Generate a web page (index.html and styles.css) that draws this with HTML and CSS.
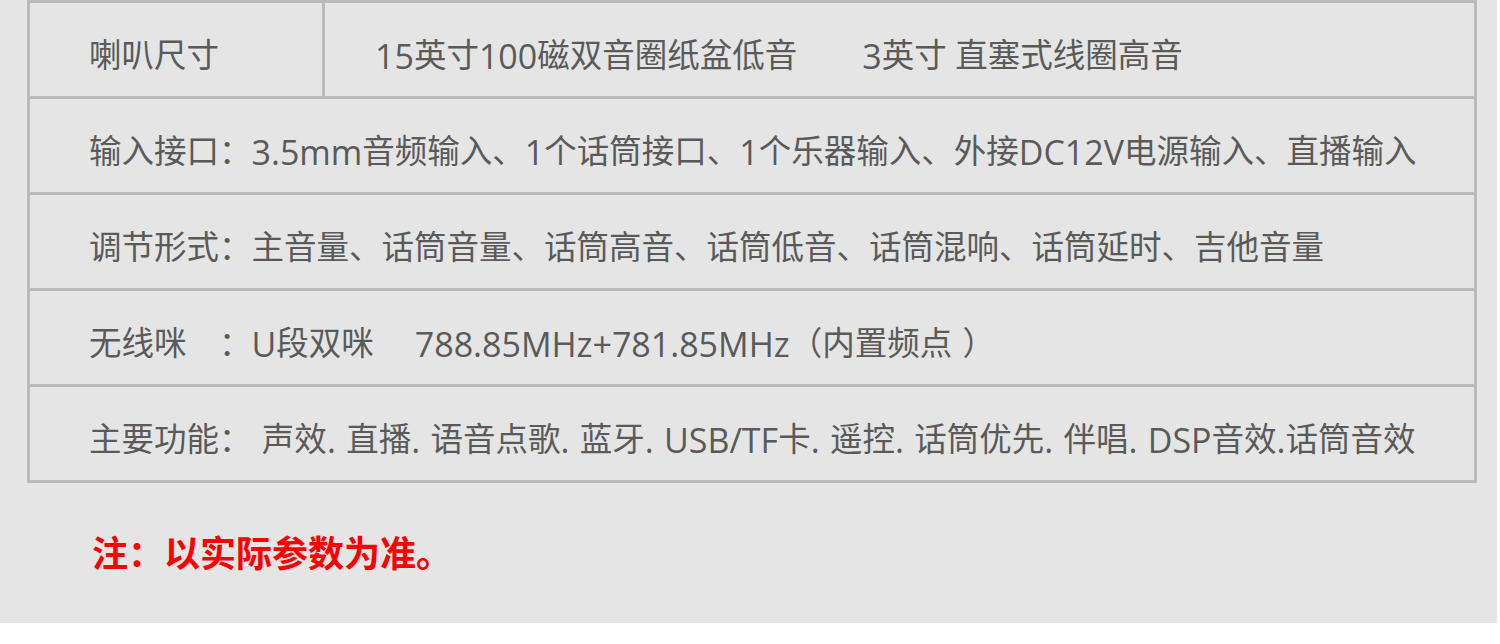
FILE: index.html
```html
<!DOCTYPE html>
<html lang="zh-CN">
<head>
<meta charset="utf-8">
<title>参数</title>
<link rel="stylesheet" href="styles.css">
</head>
<body>
<div class="page">
  <div class="spec">
    <div class="row row-split">
      <div class="cell-label">喇叭尺寸</div>
      <div class="cell-value"><span class="en">15</span>英寸<span class="en">100</span>磁双音圈纸盆低音　　<span class="en">3</span>英寸 直塞式线圈高音</div>
    </div>
    <div class="row">输入接口：<span class="en">3.5mm</span>音频输入、<span class="en">1</span>个话筒接口、<span class="en">1</span>个乐器输入、外接<span class="en">DC12V</span>电源输入、直播输入</div>
    <div class="row">调节形式：主音量、话筒音量、话筒高音、话筒低音、话筒混响、话筒延时、吉他音量</div>
    <div class="row">无线咪　：<span class="en">U</span>段双咪　 <span class="en">788.85MHz+781.85MHz</span>（内置频点<span class="en"> </span>）</div>
    <div class="row">主要功能：<span class="en"> </span>声效<span class="en">. </span>直播<span class="en">. </span>语音点歌<span class="en">. </span>蓝牙<span class="en">. USB/TF</span>卡<span class="en">. </span>遥控<span class="en">. </span>话筒优先<span class="en">. </span>伴唱<span class="en">. DSP</span>音效<span class="en">.</span>话筒音效</div>
  </div>
  <p class="note">注：以实际参数为准。</p>
</div>
</body>
</html>
```

FILE: styles.css
```css
html, body {
  margin: 0;
  padding: 0;
  background: #ffffff;
}

.page {
  width: 1497px;
  height: 623px;
  box-sizing: border-box;
  padding-left: 27px;
  background: #e5e5e5;
  font-family: "Open Sans", "Noto Sans CJK SC", sans-serif;
  overflow: hidden;
}

.spec {
  width: 1450px;
  box-sizing: border-box;
  border: 3px solid #bababa;
}

.row {
  height: 96px;
  box-sizing: border-box;
  display: flex;
  align-items: center;
  padding-left: 59px;
  padding-top: 12px;
  font-size: 32.5px;
  line-height: 1;
  color: #5a5a5a;
  white-space: pre;
  border-top: 3px solid #bababa;
}

.row:first-child {
  height: 93px;
  border-top: 0;
}

.row-split {
  padding-left: 0;
  padding-top: 0;
  align-items: stretch;
}

.cell-label {
  width: 295px;
  box-sizing: border-box;
  padding-left: 59px;
  padding-top: 12px;
  display: flex;
  align-items: center;
  border-right: 3px solid #bababa;
}

.cell-value {
  flex: 1;
  padding-left: 50px;
  padding-top: 12px;
  display: flex;
  align-items: center;
}

.en {
  font-size: 34px;
  line-height: 32px;
  word-spacing: 1.5px;
}

.note {
  margin: 50px 0 0 65px;
  font-family: "Noto Sans CJK SC", sans-serif;
  font-size: 36px;
  line-height: 1;
  font-weight: bold;
  color: #ff0000;
}
```
